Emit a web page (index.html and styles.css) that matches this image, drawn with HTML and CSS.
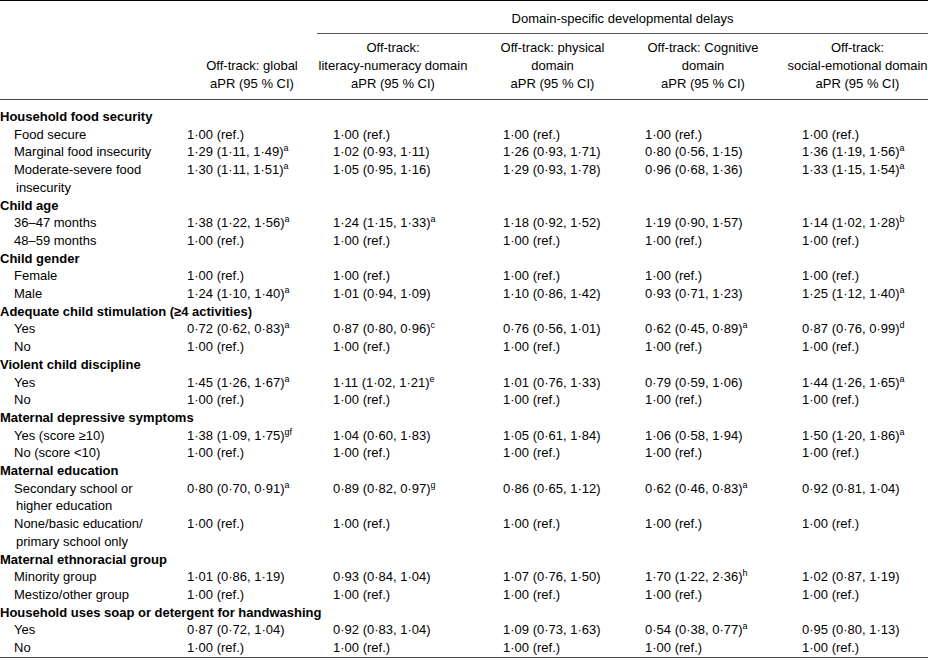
FILE: index.html
```html
<!DOCTYPE html>
<html lang="en">
<head>
<meta charset="utf-8">
<title>Table</title>
<link rel="stylesheet" href="styles.css">
</head>
<body>
<table class="tbl">
<colgroup>
<col class="c-label"><col class="c-1"><col class="c-2"><col class="c-3"><col class="c-4"><col class="c-5">
</colgroup>
<thead>
<tr>
<th class="blank" colspan="2"></th>
<th class="spanner" colspan="4">Domain-specific developmental delays</th>
</tr>
<tr class="colheads">
<th class="blank"></th>
<th class="h h1">Off-track: global<br>aPR (95 % CI)</th>
<th class="h h2">Off-track:<br>literacy-numeracy domain<br>aPR (95 % CI)</th>
<th class="h h3">Off-track: physical<br>domain<br>aPR (95 % CI)</th>
<th class="h h4">Off-track: Cognitive<br>domain<br>aPR (95 % CI)</th>
<th class="h h5">Off-track:<br>social-emotional domain<br>aPR (95 % CI)</th>
</tr>
</thead>
<tbody>
<tr class="first"><td class="grp" colspan="6">Household food security</td></tr>
<tr><td class="lbl">Food secure</td><td class="d d1">1·00 (ref.)</td><td class="d d2">1·00 (ref.)</td><td class="d d3">1·00 (ref.)</td><td class="d d4">1·00 (ref.)</td><td class="d d5">1·00 (ref.)</td></tr>
<tr><td class="lbl">Marginal food insecurity</td><td class="d d1">1·29 (1·11, 1·49)<sup>a</sup></td><td class="d d2">1·02 (0·93, 1·11)</td><td class="d d3">1·26 (0·93, 1·71)</td><td class="d d4">0·80 (0·56, 1·15)</td><td class="d d5">1·36 (1·19, 1·56)<sup>a</sup></td></tr>
<tr><td class="lbl">Moderate-severe food insecurity</td><td class="d d1">1·30 (1·11, 1·51)<sup>a</sup></td><td class="d d2">1·05 (0·95, 1·16)</td><td class="d d3">1·29 (0·93, 1·78)</td><td class="d d4">0·96 (0·68, 1·36)</td><td class="d d5">1·33 (1·15, 1·54)<sup>a</sup></td></tr>
<tr><td class="grp" colspan="6">Child age</td></tr>
<tr><td class="lbl">36–47 months</td><td class="d d1">1·38 (1·22, 1·56)<sup>a</sup></td><td class="d d2">1·24 (1·15, 1·33)<sup>a</sup></td><td class="d d3">1·18 (0·92, 1·52)</td><td class="d d4">1·19 (0·90, 1·57)</td><td class="d d5">1·14 (1·02, 1·28)<sup>b</sup></td></tr>
<tr><td class="lbl">48–59 months</td><td class="d d1">1·00 (ref.)</td><td class="d d2">1·00 (ref.)</td><td class="d d3">1·00 (ref.)</td><td class="d d4">1·00 (ref.)</td><td class="d d5">1·00 (ref.)</td></tr>
<tr><td class="grp" colspan="6">Child gender</td></tr>
<tr><td class="lbl">Female</td><td class="d d1">1·00 (ref.)</td><td class="d d2">1·00 (ref.)</td><td class="d d3">1·00 (ref.)</td><td class="d d4">1·00 (ref.)</td><td class="d d5">1·00 (ref.)</td></tr>
<tr><td class="lbl">Male</td><td class="d d1">1·24 (1·10, 1·40)<sup>a</sup></td><td class="d d2">1·01 (0·94, 1·09)</td><td class="d d3">1·10 (0·86, 1·42)</td><td class="d d4">0·93 (0·71, 1·23)</td><td class="d d5">1·25 (1·12, 1·40)<sup>a</sup></td></tr>
<tr><td class="grp" colspan="6">Adequate child stimulation (≥4 activities)</td></tr>
<tr><td class="lbl">Yes</td><td class="d d1">0·72 (0·62, 0·83)<sup>a</sup></td><td class="d d2">0·87 (0·80, 0·96)<sup>c</sup></td><td class="d d3">0·76 (0·56, 1·01)</td><td class="d d4">0·62 (0·45, 0·89)<sup>a</sup></td><td class="d d5">0·87 (0·76, 0·99)<sup>d</sup></td></tr>
<tr><td class="lbl">No</td><td class="d d1">1·00 (ref.)</td><td class="d d2">1·00 (ref.)</td><td class="d d3">1·00 (ref.)</td><td class="d d4">1·00 (ref.)</td><td class="d d5">1·00 (ref.)</td></tr>
<tr><td class="grp" colspan="6">Violent child discipline</td></tr>
<tr><td class="lbl">Yes</td><td class="d d1">1·45 (1·26, 1·67)<sup>a</sup></td><td class="d d2">1·11 (1·02, 1·21)<sup>e</sup></td><td class="d d3">1·01 (0·76, 1·33)</td><td class="d d4">0·79 (0·59, 1·06)</td><td class="d d5">1·44 (1·26, 1·65)<sup>a</sup></td></tr>
<tr><td class="lbl">No</td><td class="d d1">1·00 (ref.)</td><td class="d d2">1·00 (ref.)</td><td class="d d3">1·00 (ref.)</td><td class="d d4">1·00 (ref.)</td><td class="d d5">1·00 (ref.)</td></tr>
<tr><td class="grp" colspan="6">Maternal depressive symptoms</td></tr>
<tr><td class="lbl">Yes (score ≥10)</td><td class="d d1">1·38 (1·09, 1·75)<sup>gf</sup></td><td class="d d2">1·04 (0·60, 1·83)</td><td class="d d3">1·05 (0·61, 1·84)</td><td class="d d4">1·06 (0·58, 1·94)</td><td class="d d5">1·50 (1·20, 1·86)<sup>a</sup></td></tr>
<tr><td class="lbl">No (score &lt;10)</td><td class="d d1">1·00 (ref.)</td><td class="d d2">1·00 (ref.)</td><td class="d d3">1·00 (ref.)</td><td class="d d4">1·00 (ref.)</td><td class="d d5">1·00 (ref.)</td></tr>
<tr><td class="grp" colspan="6">Maternal education</td></tr>
<tr><td class="lbl">Secondary school or higher education</td><td class="d d1">0·80 (0·70, 0·91)<sup>a</sup></td><td class="d d2">0·89 (0·82, 0·97)<sup>g</sup></td><td class="d d3">0·86 (0·65, 1·12)</td><td class="d d4">0·62 (0·46, 0·83)<sup>a</sup></td><td class="d d5">0·92 (0·81, 1·04)</td></tr>
<tr><td class="lbl">None/basic education/ primary school only</td><td class="d d1">1·00 (ref.)</td><td class="d d2">1·00 (ref.)</td><td class="d d3">1·00 (ref.)</td><td class="d d4">1·00 (ref.)</td><td class="d d5">1·00 (ref.)</td></tr>
<tr><td class="grp" colspan="6">Maternal ethnoracial group</td></tr>
<tr><td class="lbl">Minority group</td><td class="d d1">1·01 (0·86, 1·19)</td><td class="d d2">0·93 (0·84, 1·04)</td><td class="d d3">1·07 (0·76, 1·50)</td><td class="d d4">1·70 (1·22, 2·36)<sup>h</sup></td><td class="d d5">1·02 (0·87, 1·19)</td></tr>
<tr><td class="lbl">Mestizo/other group</td><td class="d d1">1·00 (ref.)</td><td class="d d2">1·00 (ref.)</td><td class="d d3">1·00 (ref.)</td><td class="d d4">1·00 (ref.)</td><td class="d d5">1·00 (ref.)</td></tr>
<tr><td class="grp" colspan="6">Household uses soap or detergent for handwashing</td></tr>
<tr><td class="lbl">Yes</td><td class="d d1">0·87 (0·72, 1·04)</td><td class="d d2">0·92 (0·83, 1·04)</td><td class="d d3">1·09 (0·73, 1·63)</td><td class="d d4">0·54 (0·38, 0·77)<sup>a</sup></td><td class="d d5">0·95 (0·80, 1·13)</td></tr>
<tr class="last"><td class="lbl">No</td><td class="d d1">1·00 (ref.)</td><td class="d d2">1·00 (ref.)</td><td class="d d3">1·00 (ref.)</td><td class="d d4">1·00 (ref.)</td><td class="d d5">1·00 (ref.)</td></tr>
</tbody>
</table>
</body>
</html>
```
FILE: styles.css
```css
html, body {
  margin: 0;
  padding: 0;
  background: #fff;
}
body {
  font-family: "Liberation Sans", Arial, Helvetica, sans-serif;
  font-size: 13px;
  color: #000;
}
.tbl {
  width: 928px;
  table-layout: fixed;
  border-collapse: collapse;
  border-top: 1px solid #000;
  border-bottom: 1px solid #444;
}
.c-label { width: 187px; }
.c-1 { width: 130px; }
.c-2 { width: 160px; }
.c-3 { width: 155px; }
.c-4 { width: 155px; }
.c-5 { width: 141px; }

.tbl th, .tbl td {
  padding: 0;
  font-weight: normal;
  line-height: 17.7px;
  vertical-align: top;
}
.tbl th.spanner {
  text-align: center;
  line-height: 18px;
  padding: 9px 0 5px;
  border-bottom: 1px solid #555;
}
.colheads th {
  border-bottom: 1px solid #444;
  padding: 5px 0 6px;
  line-height: 18px;
  vertical-align: bottom;
  text-align: center;
  white-space: nowrap;
}
.h2 { padding-right: 8px !important; }
.h3 { padding-right: 4px !important; }
.h4 { padding-right: 13px !important; }

.tbl tr.first td { padding-top: 8px; }
.tbl td.grp {
  font-weight: bold;
  padding-left: 0;
  white-space: nowrap;
}
.tbl td.lbl {
  padding-left: 16px;
  text-indent: -2px;
  padding-right: 28px;
}
.d { white-space: nowrap; }
.d2 { padding-left: 16px !important; }
.d3 { padding-left: 26px !important; }
.d4 { padding-left: 13px !important; }
.d5 { padding-left: 15px !important; }
sup {
  font-size: 9px;
  line-height: 0;
  vertical-align: 5px;
}
```
